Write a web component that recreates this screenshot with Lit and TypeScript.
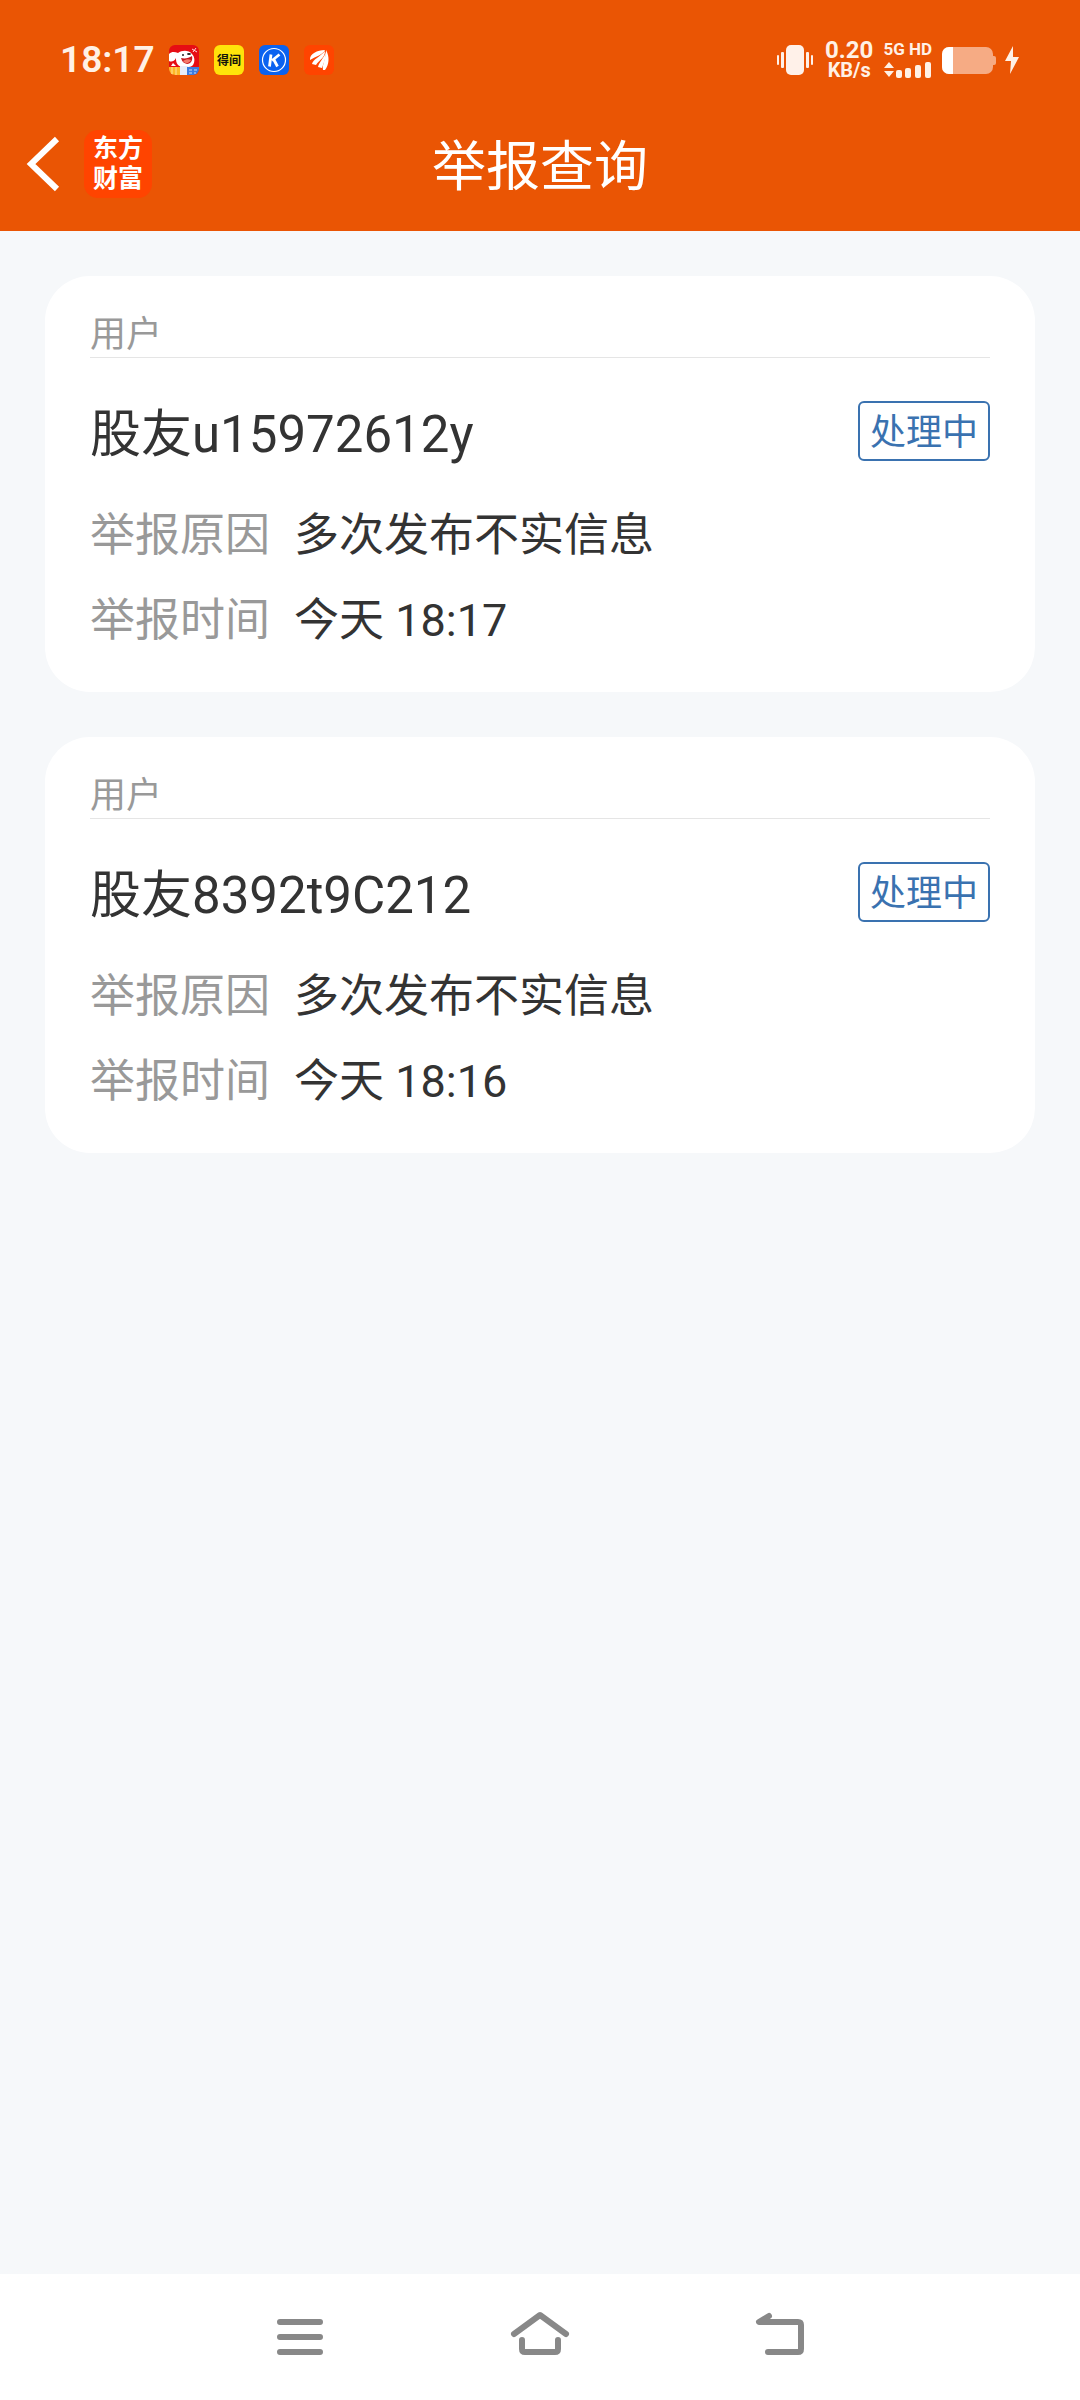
import { LitElement, html, css, svg } from "lit";
import { customElement, property } from "lit/decorators.js";

const fontStack = css`Roboto, "Noto Sans CJK SC", sans-serif`;

interface Report {
  kind: string;
  name: string;
  status: string;
  reason: string;
  time: string;
}

const reports: Report[] = [
  { kind: "用户", name: "股友u15972612y", status: "处理中", reason: "多次发布不实信息", time: "今天 18:17" },
  { kind: "用户", name: "股友8392t9C212", status: "处理中", reason: "多次发布不实信息", time: "今天 18:16" },
];

@customElement("status-bar")
export class StatusBar extends LitElement {
  static styles = css`
    :host {
      display: flex;
      align-items: center;
      justify-content: space-between;
      height: 120px;
      padding: 0 60px;
      color: #fff1e6;
      font-family: ${fontStack};
    }
    .side {
      display: flex;
      align-items: center;
    }
    .apps {
      display: flex;
      gap: 15px;
      margin-left: 14px;
    }
    .clock {
      font-size: 37px;
      line-height: 40px;
      font-weight: 600;
    }
    .icon {
      display: block;
    }
    .speed {
      display: flex;
      flex-direction: column;
      align-items: center;
      margin-left: 11px;
      font-weight: 700;
    }
    .rate {
      font-size: 24px;
      line-height: 20px;
    }
    .unit {
      font-size: 20px;
      line-height: 20px;
    }
    .network {
      display: flex;
      flex-direction: column;
      gap: 4px;
      margin: 0 10px;
      font-size: 17px;
      line-height: 15px;
      font-weight: 700;
    }
    .bolt {
      margin-left: 8px;
    }
  `;

  render() {
    return html`
      <div class="side">
        <span class="clock">18:17</span>
        <div class="apps">
          <svg class="icon" width="30" height="30" viewBox="0 0 30 30" aria-hidden="true">
            <defs><clipPath id="c"><rect width="30" height="30" rx="6" /></clipPath></defs>
            <g clip-path="url(#c)">
              <rect width="30" height="30" fill="#e60d14" />
              <path d="M0 9C3 6 6 7 9 8C13 5 20 5 23 9C26 12 26 17 24 20C22 23 12 23 9 20C7 18 7 15 7 13C5 17 2 17 0 16Z" fill="#fff" />
              <path d="M12 13C16 14 20 13 23 11C24 15 22 19 18 19C14 18 13 16 12 13Z" fill="#c8171d" />
              <path d="M14 16C17 14 20 14 22 15C20 19 16 19 14 16Z" fill="#f47a6a" />
              <circle cx="14" cy="10" r="1" fill="#222" />
              <ellipse cx="20" cy="9" rx="2" ry="1" fill="#222" />
              <path d="M23 4l5 3M27 3l-3 4" stroke="#ffd9d9" stroke-width="1" />
              <path d="M2 21L4 18L7 21Z" fill="#fff" />
              <rect y="22" width="11" height="8" fill="#fdb827" />
              <path d="M3 22v8M7 22v8" stroke="#ffe29a" stroke-width="1" />
              <rect x="11" y="21" width="8" height="9" fill="#e8eef8" />
              <rect x="18" y="22" width="12" height="8" fill="#3b7de0" />
              <path d="M20 25h3M20 28h3M25 25h3M26 27v2" stroke="#cfe0fb" stroke-width="1" />
            </g>
          </svg>
          <svg class="icon" width="30" height="30" viewBox="0 0 30 30" aria-hidden="true">
            <rect width="30" height="30" rx="6" fill="#ffe30a" />
            <text x="15" y="20" text-anchor="middle" font-size="12" font-weight="700" fill="#15130a">得间</text>
          </svg>
          <svg class="icon" width="30" height="30" viewBox="0 0 30 30" aria-hidden="true">
            <rect width="30" height="30" rx="6" fill="#0b62f0" />
            <circle cx="15" cy="15" r="11.500" fill="none" stroke="#fff" stroke-width="1.200" />
            <path d="M12 9.500L10.500 21.500M20.500 9.500L13 15.500M14.500 14L18.500 21.500" fill="none" stroke="#fff" stroke-width="2.800" />
          </svg>
          <svg class="icon" width="30" height="30" viewBox="0 0 30 30" aria-hidden="true">
            <rect width="30" height="30" rx="6" fill="#ff4400" />
            <path d="M6 14C6 9 13 5 21 5C19 10 12 11 6 15Z" fill="#fff" />
            <path d="M8 19C9 14 16 12 21 6C21 13 15 15 12 20Z" fill="#fff" />
            <path d="M14 22C15 17 20 13 22 7C22 13 20 17 18 23Z" fill="#fff" />
            <path d="M19 25C18 19 22 14 22 5C26 12 25 20 21 25Z" fill="#fff" />
          </svg>
        </div>
      </div>
      <div class="side">
        <svg class="icon" width="38" height="32" viewBox="0 0 38 32" aria-hidden="true">
          <g fill="#fff1e9">
            <rect x="10" y="1" width="18" height="30" rx="5" />
            <rect x="5" y="8" width="3" height="16" rx="1" />
            <rect x="1" y="11" width="2" height="10" rx="1" />
            <rect x="30" y="8" width="3" height="16" rx="1" />
            <rect x="35" y="11" width="2" height="10" rx="1" />
          </g>
        </svg>
        <div class="speed"><span class="rate">0.20</span><span class="unit">KB/s</span></div>
        <div class="network">
          <span>5G HD</span>
          <svg class="icon" width="48" height="17" viewBox="0 0 48 17" aria-hidden="true">
            <path d="M1 7L6 1L11 7ZM1 10H11L6 16Z" fill="#fff1e6" />
            <g fill="#fff1e6">
              <rect x="13" y="9" width="6" height="8" rx="2" />
              <rect x="22" y="7" width="6" height="10" rx="2" />
              <rect x="32" y="4" width="6" height="13" rx="2" />
              <rect x="42" y="1" width="6" height="16" rx="2" />
            </g>
          </svg>
        </div>
        <svg class="icon" width="54" height="28" viewBox="0 0 54 28" aria-hidden="true">
          <rect width="51" height="27" rx="7" y="1" fill="#f6ab84" />
          <path d="M51 10h1q2 0 2 2v5q0 2-2 2h-1z" fill="#f6ab84" />
          <path d="M11 1H7a7 7 0 0 0-7 7v13a7 7 0 0 0 7 7h4z" fill="#fff" />
        </svg>
        <svg class="icon bolt" width="16" height="28" viewBox="0 0 16 28" aria-hidden="true">
          <path d="M9 0L1 15H7L6 28L15 11H9Z" fill="#fff1e6" />
        </svg>
      </div>
    `;
  }
}

@customElement("title-bar")
export class TitleBar extends LitElement {
  @property() heading = "";

  static styles = css`
    :host {
      display: grid;
      grid-template-columns: 1fr auto 1fr;
      align-items: center;
      height: 88px;
      padding: 0 24px 23px;
      color: #fff;
      font-family: ${fontStack};
    }
    .start {
      display: flex;
      align-items: center;
      gap: 24px;
    }
    .back {
      display: block;
      padding: 0;
      border: 0;
      background: none;
    }
    .icon {
      display: block;
    }
    .logo {
      display: flex;
      flex-direction: column;
      align-items: center;
      justify-content: center;
      width: 68px;
      height: 68px;
      border-radius: 14px;
      background: #ff4400;
      font-size: 25px;
      line-height: 30px;
      font-weight: 700;
      text-decoration: none;
      color: #fff;
    }
    .heading {
      margin: 0;
      padding-top: 8px;
      font-size: 54px;
      line-height: 60px;
      font-weight: 400;
    }
  `;

  render() {
    return html`
      <div class="start">
        <button class="back" aria-label="返回">
          <svg class="icon" width="36" height="60" viewBox="0 0 36 60" aria-hidden="true">
            <path d="M33 5L7 30L33 55" fill="none" stroke="#fff" stroke-width="6" />
          </svg>
        </button>
        <a class="logo" href="#"><span>东方</span><span>财富</span></a>
      </div>
      <h1 class="heading">${this.heading}</h1>
    `;
  }
}

@customElement("report-card")
export class ReportCard extends LitElement {
  @property({ attribute: false }) report!: Report;

  static styles = css`
    :host {
      display: block;
      padding: 38px 45px 29px;
      border-radius: 45px;
      background: #fff;
      color: #333;
      font-family: ${fontStack};
    }
    .kind {
      border-bottom: 1px solid #e5e5e5;
      color: #999;
      font-size: 36px;
      line-height: 43px;
    }
    .head {
      display: flex;
      align-items: center;
      justify-content: space-between;
      padding: 43px 0 28px;
    }
    .name {
      margin: 0;
      padding-top: 4px;
      font-size: 51px;
      line-height: 60px;
      font-weight: 400;
    }
    .status {
      margin-bottom: 4px;
      padding: 4px 10px 0;
      border: 2px solid #3a72b0;
      border-radius: 6px;
      color: #3a72b0;
      font-size: 36px;
      line-height: 52px;
    }
    .facts {
      display: grid;
      grid-template-columns: auto 1fr;
      column-gap: 24px;
      margin: 0;
      font-size: 45px;
      line-height: 85px;
    }
    .term {
      color: #999;
    }
    .value {
      margin: 0;
    }
  `;

  render() {
    const r = this.report;
    return html`
      <div class="kind">${r.kind}</div>
      <div class="head">
        <h2 class="name">${r.name}</h2>
        <span class="status">${r.status}</span>
      </div>
      <dl class="facts">
        <dt class="term">举报原因</dt>
        <dd class="value">${r.reason}</dd>
        <dt class="term">举报时间</dt>
        <dd class="value">${r.time}</dd>
      </dl>
    `;
  }
}

const navIcons = [
  { label: "最近任务", shape: svg`<path d="M10 15H50M10 30H50M10 45H50" />` },
  { label: "主页", shape: svg`<path d="M4 27L30 8L56 27M12 33V42Q12 45 15 45H45Q48 45 48 42V33" />` },
  { label: "返回", shape: svg`<path d="M19 9L9 15H48Q51 15 51 18V42Q51 45 48 45H18" />` },
];

@customElement("nav-keys")
export class NavKeys extends LitElement {
  static styles = css`
    :host {
      display: flex;
      align-items: center;
      justify-content: center;
      gap: 180px;
      height: 126px;
      background: #fff;
    }
    .key {
      padding: 0;
      border: 0;
      background: none;
    }
    .icon {
      display: block;
      fill: none;
      stroke: #888;
      stroke-width: 6;
      stroke-linecap: round;
      stroke-linejoin: round;
    }
  `;

  render() {
    return navIcons.map(
      (n) => html`
        <button class="key" aria-label=${n.label}>
          <svg class="icon" width="60" height="60" viewBox="0 0 60 60" aria-hidden="true">${n.shape}</svg>
        </button>
      `,
    );
  }
}

@customElement("app-root")
export class AppRoot extends LitElement {
  static styles = css`
    :host {
      display: flex;
      flex-direction: column;
      min-height: 100vh;
      background: #f6f8fa;
    }
    .top {
      background: #ea5504;
    }
    .list {
      display: flex;
      flex: 1;
      flex-direction: column;
      gap: 45px;
      padding: 45px;
    }
  `;

  render() {
    return html`
      <header class="top">
        <status-bar></status-bar>
        <title-bar heading="举报查询"></title-bar>
      </header>
      <main class="list">${reports.map((r) => html`<report-card .report=${r}></report-card>`)}</main>
      <nav-keys></nav-keys>
    `;
  }
}
